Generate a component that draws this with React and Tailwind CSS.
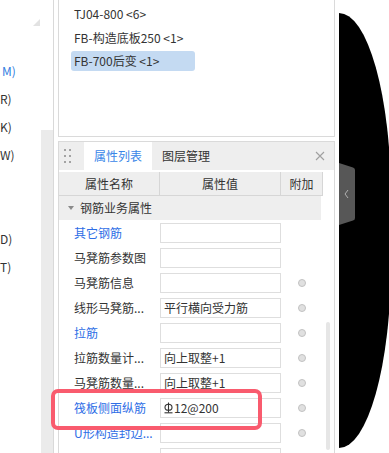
import React from 'react';

// tails of the tree labels on the far left
const sideLabels = [
  { text: 'M)', pad: 'pl-[2px]', color: 'text-[#2f7de1]' },
  { text: 'R)', pad: 'pl-0', color: 'text-[#333]' },
  { text: 'K)', pad: 'pl-0', color: 'text-[#333]' },
  { text: 'W)', pad: 'pl-0', color: 'text-[#333]' },
  { text: '', pad: 'pl-0', color: 'text-[#333]' },
  { text: '', pad: 'pl-0', color: 'text-[#333]' },
  { text: 'D)', pad: 'pl-0', color: 'text-[#333]' },
  { text: 'T)', pad: 'pl-0', color: 'text-[#333]' },
];

const listItems = [
  { text: 'TJ04-800 <6>' },
  { text: 'FB-构造底板250 <1>' },
  { text: 'FB-700后变 <1>', selected: true },
];

const RebarMark = () => (
  <svg width="9" height="12" viewBox="0 0 9 12" className="mr-[1px]">
    <path d="M4.5 0.5V10.5" stroke="#333" strokeWidth="1.1" fill="none" />
    <path d="M1 5.5C1 3.2 2.6 2.3 4.5 2.3C6.4 2.3 8 3.2 8 5.5C8 7.6 6.4 8.3 4.5 8.3C2.6 8.3 1 7.6 1 5.5Z" stroke="#333" strokeWidth="1.1" fill="none" />
    <path d="M0.5 10.8H8.5" stroke="#333" strokeWidth="1.1" fill="none" />
  </svg>
);

const rows = [
  { label: '其它钢筋', blue: true },
  { label: '马凳筋参数图' },
  { label: '马凳筋信息', radio: true },
  { label: '线形马凳筋...', value: '平行横向受力筋', radio: true },
  { label: '拉筋', blue: true, radio: true },
  { label: '拉筋数量计...', value: '向上取整+1', radio: true },
  { label: '马凳筋数量...', value: '向上取整+1', radio: true },
  { label: '筏板侧面纵筋', blue: true, value: '12@200', mark: true, radio: true },
  { label: 'U形构造封边...', blue: true, radio: true },
  { label: '', radio: true },
];

export default function App() {
  return (
    <div className="relative flex w-[389px] h-[453px] overflow-hidden bg-white font-['Noto_Sans_CJK_SC','Noto_Sans',sans-serif] text-[12px] text-[#333]">
      {/* left tree (clipped) */}
      <div className="flex w-[53px] shrink-0">
        <div className="flex w-[41px] flex-col">
          <div className="ml-[33px] mt-[19px] h-0 w-0 border-b-[7px] border-l-[7px] border-l-transparent border-b-[#e2e2e2]" />
          <div className="mt-[31px] flex flex-col">
            {sideLabels.map((s, i) => (
              <div key={i} className={`flex h-[28px] items-center whitespace-nowrap ${s.pad} ${s.color}`}>
                {s.text}
              </div>
            ))}
          </div>
        </div>
        <div className="flex w-[12px] flex-col pt-[130px]">
          <div className="flex-1 bg-[#ebebeb]" />
        </div>
      </div>
      <div className="w-px shrink-0 bg-[#d9d9d9]" />
      <div className="w-[4px] shrink-0" />

      {/* panels */}
      <div className="flex h-[453px] w-[277px] shrink-0 flex-col overflow-hidden">
        <div className="flex h-[137px] shrink-0 flex-col gap-[3.5px] border-x border-b border-[#dadada] pt-[4px]">
          {listItems.map((it, i) => (
            <div
              key={i}
              className={`ml-[12px] flex h-[20px] w-[124px] items-center whitespace-nowrap rounded-[3px] pl-[3px] ${it.selected ? 'bg-[#c4daf2]' : ''}`}
            >
              {it.text}
            </div>
          ))}
        </div>

        <div className="mt-[4px] flex shrink-0 flex-col border-x border-t border-[#dadada]">
          {/* tabs */}
          <div className="flex h-[28px] items-stretch bg-[#eeeeee]">
            <div className="ml-[5px] grid grid-cols-2 content-center gap-x-[3px] gap-y-[4px]">
              {[0, 1, 2, 3, 4, 5].map((d) => (
                <div key={d} className="h-[2px] w-[2px] bg-[#a3a3a3]" />
              ))}
            </div>
            <div className="ml-[13px] flex items-center bg-white px-[10px] text-[#3a86e8]">属性列表</div>
            <div className="flex items-center px-[10px] text-[#333]">图层管理</div>
            <div className="ml-auto mr-[9px] flex items-center">
              <svg width="10" height="10" viewBox="0 0 10 10">
                <path d="M1 1L9 9M9 1L1 9" stroke="#a0a0a0" strokeWidth="1.1" />
              </svg>
            </div>
          </div>

          <div className="flex">
            <div className="mt-[2px] flex w-[264px] flex-col">
              <div className="flex h-[24px] border-b border-[#d6d6d6] bg-[#eeeeee]">
                <div className="flex w-[101px] items-center justify-center border-r border-[#d6d6d6]">属性名称</div>
                <div className="flex w-[121px] items-center justify-center border-r border-[#d6d6d6]">属性值</div>
                <div className="flex w-[42px] items-center justify-center border-r border-[#d6d6d6]">附加</div>
              </div>
              <div className="flex h-[24px] w-[262px] items-center bg-[#eeeeee] pl-[9px]">
                <div className="h-0 w-0 border-x-[3px] border-t-[4px] border-x-transparent border-t-[#8a8a8a]" />
                <span className="ml-[6px]">钢筋业务属性</span>
              </div>
              {rows.map((r, i) => (
                <div key={i} className="flex h-[25px] shrink-0 pt-[3px]">
                  <div className={`flex h-[20px] w-[101px] items-center overflow-hidden whitespace-nowrap pl-[15px] ${r.blue ? 'text-[#2e6ee6]' : 'text-[#333]'}`}>
                    {r.label}
                  </div>
                  <div className="flex h-[20px] w-[121px] items-center whitespace-nowrap border border-[#dedede] pl-[3px]">
                    {r.mark && <RebarMark />}
                    {r.value}
                  </div>
                  <div className="flex h-[20px] w-[42px] items-center justify-center">
                    {r.radio && <div className="h-[8px] w-[8px] rounded-full border border-[#c2c2c2] bg-[#e0e0e0]" />}
                  </div>
                </div>
              ))}
            </div>
            <div className="flex w-[11px] flex-col pt-[152px]">
              <div className="ml-[3px] h-[128px] w-[4px] rounded-full bg-[#e6e6e6]" />
            </div>
          </div>
        </div>
      </div>

      <div className="w-[4px] shrink-0" />

      {/* device bezel with collapse handle */}
      <div className="mt-[13px] flex h-[435px] w-[52px] shrink-0 flex-col rounded-br-[52px_185px] rounded-tr-[52px_185px] bg-black pt-[150px]">
        <svg width="16" height="62" viewBox="0 0 16 62">
          <path d="M0 0L14 4.5Q16 5 16 7V55Q16 57 14 57.5L0 62Z" fill="#575757" />
          <path d="M9 27L6 31L9 35" stroke="#b0b0b0" strokeWidth="1" fill="none" />
        </svg>
      </div>

      {/* annotation box */}
      <div className="absolute left-[51px] top-[389px] h-[41px] w-[211px] rounded-[7px] border-[4px] border-[#f95b6e]" />
    </div>
  );
}
